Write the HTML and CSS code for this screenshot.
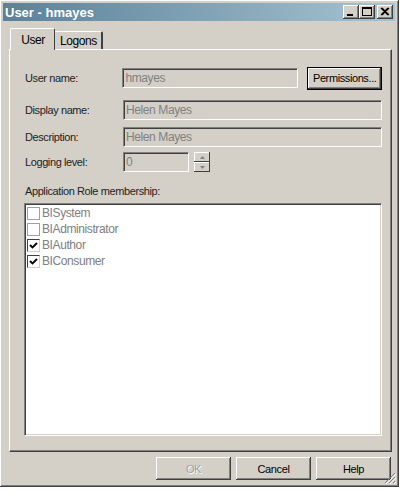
FILE: index.html
```html
<!DOCTYPE html>
<html lang="en">
<head>
    <meta charset="UTF-8">
    <title>User - hmayes</title>
    <link rel="stylesheet" href="styles.css">
</head>
<body>
    <div class="window">
        <div class="titlebar">
            <span class="title">User - hmayes</span>
            <div class="caption-buttons">
                <span class="cap-btn"><svg width="16" height="14" viewBox="0 0 16 14"><rect x="4" y="9" width="6" height="2" fill="#000"/></svg></span>
                <span class="cap-btn"><svg width="16" height="14" viewBox="0 0 16 14"><rect x="3.5" y="2.5" width="9" height="8" fill="none" stroke="#000"/><rect x="3" y="2" width="10" height="2" fill="#000"/></svg></span>
                <span class="cap-btn close"><svg width="16" height="14" viewBox="0 0 16 14"><path d="M4 3 L11 10 M5 3 L12 10 M11 3 L4 10 M12 3 L5 10" stroke="#000" stroke-width="1.2"/></svg></span>
            </div>
        </div>

        <div class="content">
            <div class="tabs">
                <span class="tab active">User</span>
                <span class="tab">Logons</span>
            </div>
            <div class="panel">
                <div class="row first">
                    <label class="lbl">User name:</label>
                    <div class="field short">hmayes</div>
                    <button class="btn perm">Permissions...</button>
                </div>
                <div class="row gap11">
                    <label class="lbl">Display name:</label>
                    <div class="field wide">Helen Mayes</div>
                </div>
                <div class="row gap7">
                    <label class="lbl">Description:</label>
                    <div class="field wide">Helen Mayes</div>
                </div>
                <div class="row gap5">
                    <label class="lbl">Logging level:</label>
                    <div class="field level">0</div>
                    <div class="spinner">
                        <span class="spin up"><svg width="5" height="3" viewBox="0 0 5 3"><path d="M2.5 0 L5 3 L0 3 Z" fill="#808080"/></svg></span>
                        <span class="spin down"><svg width="5" height="3" viewBox="0 0 5 3"><path d="M0 0 L5 0 L2.5 3 Z" fill="#808080"/></svg></span>
                    </div>
                </div>

                <div class="group-label">Application Role membership:</div>
                <div class="listbox">
                    <div class="item"><span class="check"></span>BISystem</div>
                    <div class="item"><span class="check"></span>BIAdministrator</div>
                    <div class="item"><span class="check on"><svg width="9" height="9" viewBox="0 0 9 9"><path d="M1 4 L3.5 6.5 L8 2" fill="none" stroke="#000" stroke-width="1.8"/></svg></span>BIAuthor</div>
                    <div class="item"><span class="check on"><svg width="9" height="9" viewBox="0 0 9 9"><path d="M1 4 L3.5 6.5 L8 2" fill="none" stroke="#000" stroke-width="1.8"/></svg></span>BIConsumer</div>
                </div>
            </div>

            <div class="actions">
                <button class="btn disabled">OK</button>
                <button class="btn">Cancel</button>
                <button class="btn">Help</button>
            </div>
            <div class="grip"><svg width="12" height="12" viewBox="0 0 12 12"><path d="M11 1 L1 11 M11 5 L5 11 M11 9 L9 11" stroke="#808080" stroke-width="1"/><path d="M12 2 L2 12 M12 6 L6 12 M12 10 L10 12" stroke="#fff" stroke-width="1"/></svg></div>
        </div>
    </div>
</body>
</html>
```
FILE: styles.css
```css
body {
    margin: 0;
    background: #fff;
    font-family: "Liberation Sans", Arial, sans-serif;
    font-size: 11px;
    letter-spacing: -0.4px;
    color: #000;
}
.window {
    position: relative;
    width: 399px;
    height: 487px;
    box-sizing: border-box;
    background: #d4d0c8;
    padding: 3px;
    border-right: 1px solid #404040;
    border-bottom: 1px solid #404040;
    box-shadow: inset 1px 1px 0 #fff, inset -1px -1px 0 #808080;
}
.titlebar {
    height: 18px;
    display: flex;
    align-items: center;
    justify-content: space-between;
    background: linear-gradient(to right, #5b8199, #a6c3d1);
}
.title {
    color: #fff;
    font-weight: bold;
    font-size: 13px;
    letter-spacing: 0;
    padding-left: 2px;
}
.caption-buttons {
    display: flex;
    padding-right: 2px;
}
.cap-btn {
    width: 16px;
    height: 14px;
    background: #d4d0c8;
    box-shadow: inset -1px -1px 0 #404040, inset 1px 1px 0 #fff, inset -2px -2px 0 #808080;
}
.cap-btn svg {
    display: block;
}
.cap-btn.close {
    margin-left: 2px;
}
.content {
    padding: 7px 3px 0 6px;
}
.tabs {
    display: flex;
    align-items: flex-end;
    height: 21px;
    padding-left: 1px;
}
.tab {
    height: 18px;
    line-height: 18px;
    padding: 0 4px 0 5px;
    border-top: 1px solid #fff;
    border-left: 1px solid #fff;
    border-right: 2px solid #404040;
    border-radius: 2px 2px 0 0;
    box-sizing: border-box;
    font-size: 12px;
}
.tab.active {
    height: 22px;
    line-height: 22px;
    width: 45px;
    text-align: center;
    margin-bottom: -1px;
    background: #d4d0c8;
    position: relative;
    z-index: 1;
    border-right: 1px solid #404040;
    margin-right: -1px;
}
.panel {
    height: 403px;
    box-sizing: border-box;
    border-top: 1px solid #fff;
    border-left: 1px solid #fff;
    border-right: 1px solid #404040;
    border-bottom: 1px solid #404040;
    box-shadow: inset -1px -1px 0 #808080;
    padding: 0 9px 0 15px;
}
.row {
    display: flex;
    align-items: center;
}
.row.first {
    margin-top: 17px;
    height: 22px;
}
.row.gap11 { margin-top: 11px; }
.row.gap7 { margin-top: 7px; }
.row.gap5 { margin-top: 5px; }
.lbl {
    width: 98px;
    color: #222;
}
.field {
    height: 20px;
    box-sizing: border-box;
    border-top: 1px solid #808080;
    border-left: 1px solid #808080;
    border-right: 1px solid #fff;
    border-bottom: 1px solid #fff;
    box-shadow: inset 1px 1px 0 #404040;
    color: #808080;
    font-size: 12px;
    line-height: 18px;
    padding-left: 2px;
}
.field.short { width: 177px; }
.field.wide { width: 259px; }
.field.level { width: 66px; }
.btn {
    font-family: inherit;
    font-size: 11px;
    letter-spacing: -0.4px;
    background: #d4d0c8;
    color: #000;
    width: 75px;
    height: 23px;
    border: none;
    padding: 0;
    box-shadow: inset -1px -1px 0 #404040, inset 1px 1px 0 #fff, inset -2px -2px 0 #808080;
}
.btn.perm {
    margin-left: 9px;
    outline: 1px solid #000;
    outline-offset: -1px;
    box-shadow: inset -2px -2px 0 #404040, inset 2px 2px 0 #fff, inset -3px -3px 0 #808080;
}
.btn.disabled {
    color: #a0a0a0;
    text-shadow: 1px 1px 0 #fff;
}
.spinner {
    margin-left: 5px;
    display: flex;
    flex-direction: column;
}
.spin {
    width: 16px;
    height: 10px;
    display: flex;
    align-items: center;
    justify-content: center;
    box-shadow: inset -1px -1px 0 #404040, inset 1px 1px 0 #fff;
}
.group-label {
    margin-top: 13px;
    color: #222;
    height: 13px;
}
.listbox {
    margin-top: 5px;
    margin-left: -1px;
    width: 358px;
    height: 233px;
    box-sizing: border-box;
    background: #fff;
    border-top: 1px solid #808080;
    border-left: 1px solid #808080;
    border-right: 1px solid #fff;
    border-bottom: 1px solid #fff;
    box-shadow: inset 1px 1px 0 #404040, inset -1px -1px 0 #d4d0c8;
    padding: 1px 2px;
}
.item {
    display: flex;
    align-items: center;
    height: 16px;
    color: #808080;
    font-size: 12px;
}
.check {
    width: 13px;
    height: 13px;
    box-sizing: border-box;
    border: 1px solid #a0a0a0;
    margin-right: 2px;
    display: flex;
    align-items: center;
    justify-content: center;
}
.check.on {
    border-top: 1px solid #404040;
    border-left: 1px solid #404040;
    border-right: 1px solid #d4d0c8;
    border-bottom: 1px solid #d4d0c8;
}
.actions {
    display: flex;
    justify-content: flex-end;
    gap: 5px;
    margin-top: 5px;
    padding-right: 1px;
}
.grip {
    position: absolute;
    right: 2px;
    bottom: 2px;
    width: 12px;
    height: 12px;
}
.grip svg {
    display: block;
}
```
